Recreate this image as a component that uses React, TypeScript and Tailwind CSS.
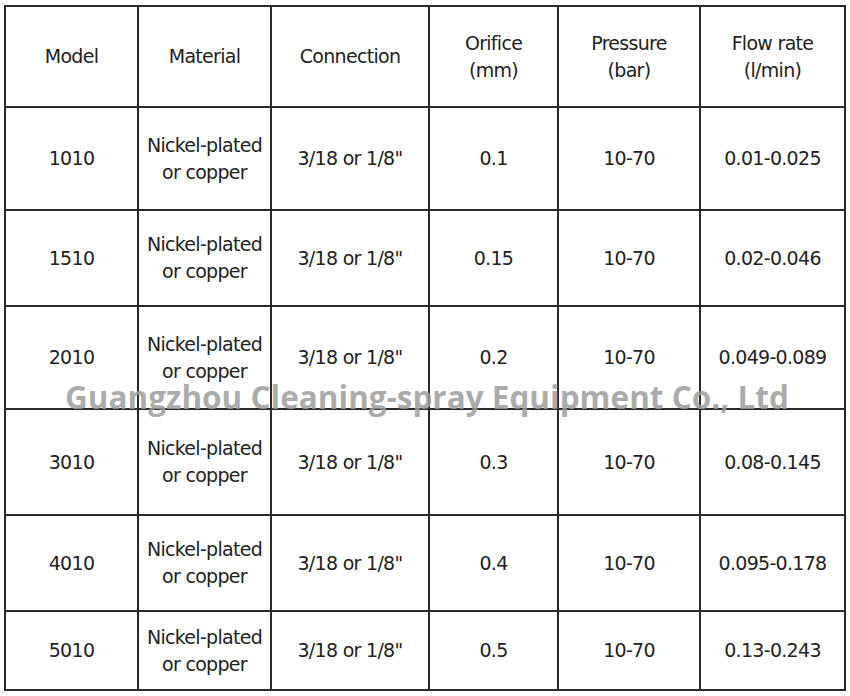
const headers = ["Model", "Material", "Connection", "Orifice\n(mm)", "Pressure\n(bar)", "Flow rate\n(l/min)"];

const rows = [
  ["1010", "0.1", "0.01-0.025"],
  ["1510", "0.15", "0.02-0.046"],
  ["2010", "0.2", "0.049-0.089"],
  ["3010", "0.3", "0.08-0.145"],
  ["4010", "0.4", "0.095-0.178"],
  ["5010", "0.5", "0.13-0.243"],
];

const colWidths = ["w-[133px]", "w-[133px]", "w-[158px]", "w-[129px]", "w-[142px]", "w-[145px]"];
const rowHeights = ["h-[103px]", "h-[96px]", "h-[103px]", "h-[106px]", "h-[96px]", "h-[79px]"];

export default function App() {
  return (
    <div className="relative h-[696px] w-[850px] bg-white text-[#222]" style={{ fontFamily: '"DejaVu Sans", Verdana, sans-serif' }}>
      <table className="absolute left-[4px] top-[5px] border-collapse text-center text-[19px] leading-[27px] tracking-[-0.7px]">
        <thead>
          <tr className="h-[101px]">
            {headers.map((h, i) => (
              <th key={h} className={`${colWidths[i]} whitespace-pre-line border-2 border-[#2a2a2a] font-normal`}>
                {h}
              </th>
            ))}
          </tr>
        </thead>
        <tbody>
          {rows.map(([model, orifice, flow], i) => (
            <tr key={model} className={rowHeights[i]}>
              <td className="border-2 border-[#2a2a2a]">{model}</td>
              <td className="border-2 border-[#2a2a2a]">
                Nickel-plated
                <br />
                or copper
              </td>
              <td className="border-2 border-[#2a2a2a]">3/18 or 1/8"</td>
              <td className="border-2 border-[#2a2a2a]">{orifice}</td>
              <td className="border-2 border-[#2a2a2a]">10-70</td>
              <td className="border-2 border-[#2a2a2a]">{flow}</td>
            </tr>
          ))}
        </tbody>
      </table>

      {/* watermark */}
      <div
        className="pointer-events-none absolute left-[65px] top-[375px] whitespace-nowrap text-[31.5px] font-bold leading-[44px] text-[#9c9c9c]/85"
        style={{ fontFamily: '"Open Sans", "DejaVu Sans", sans-serif' }}
      >
        Guangzhou Cleaning-spray Equipment Co., Ltd
      </div>
    </div>
  );
}
